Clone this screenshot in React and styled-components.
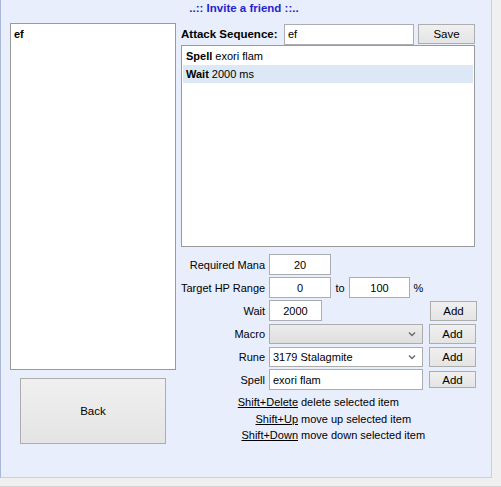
import React from 'react';
import styled, { createGlobalStyle } from 'styled-components';

const GlobalStyle = createGlobalStyle`
  html, body {
    margin: 0;
    padding: 0;
    background: #f0f0f0;
  }
  body {
    font-family: "Liberation Sans", Arial, sans-serif;
    font-size: 11px;
    color: #000;
  }
`;

const Window = styled.div`
  width: 501px;
  height: 487px;
  background: #f0f0f0;
  border-bottom: 1px solid #d4d4d4;
  box-sizing: border-box;
`;

const Panel = styled.div`
  width: 492px;
  height: 478px;
  box-sizing: border-box;
  background: #e8eefc;
  border-left: 1px solid #a9b8d6;
  border-right: 1px solid #c9cfdc;
  border-bottom: 1px solid #c9cfdc;
  display: flex;
  flex-direction: column;
`;

const Title = styled.div`
  height: 17px;
  line-height: 17px;
  text-align: center;
  font-weight: bold;
  font-size: 11.5px;
  color: #2424d0;
  padding-right: 4px;
`;

const Body = styled.div`
  display: flex;
  padding: 6px 0 0 9px;
`;

const LeftCol = styled.div`
  width: 166px;
  display: flex;
  flex-direction: column;
`;

const ListBox = styled.div`
  height: 347px;
  box-sizing: border-box;
  background: #fff;
  border: 1px solid #9a9a9a;
  padding: 3px 3px;
`;

const ListItem = styled.div`
  font-weight: bold;
  height: 15px;
  line-height: 15px;
`;

const Button = styled.button`
  box-sizing: border-box;
  width: ${p => p.w}px;
  height: ${p => p.h}px;
  padding: 0;
  border: 1px solid #adadad;
  border-radius: 0;
  background: linear-gradient(#f0f0f0, #e4e4e4);
  font-family: inherit;
  font-size: 11.5px;
  color: #000;
`;

const BackButton = styled(Button)`
  margin: 8px 0 0 10px;
`;

const RightCol = styled.div`
  width: 296px;
  margin-left: 5px;
  display: flex;
  flex-direction: column;
`;

const HeaderRow = styled.div`
  display: flex;
  align-items: center;
  height: 22px;
`;

const HeaderLabel = styled.span`
  font-weight: bold;
  width: 103px;
  font-size: 11.5px;
  white-space: nowrap;
`;

const TextInput = styled.div`
  box-sizing: border-box;
  width: ${p => p.w}px;
  height: ${p => p.h || 21}px;
  background: #fff;
  border: 1px solid #abadb3;
  display: flex;
  align-items: center;
  justify-content: ${p => (p.center ? 'center' : 'flex-start')};
  padding: 0 3px;
`;

const SaveButton = styled(Button)`
  margin-left: 4px;
`;

const SequenceList = styled.div`
  height: 202px;
  width: 294px;
  box-sizing: border-box;
  background: #fff;
  border: 1px solid #9a9a9a;
  padding: 1px 1px;
`;

const SeqRow = styled.div`
  height: 18px;
  line-height: 18px;
  padding-left: 3px;
  background: ${p => (p.selected ? '#dce8f6' : 'transparent')};

  b {
    margin-right: 3px;
  }
`;

const Form = styled.div`
  margin-top: 6px;
  display: flex;
  flex-direction: column;
`;

const FormRow = styled.div`
  display: flex;
  align-items: center;
  height: 23px;
`;

const FieldLabel = styled.span`
  width: 84px;
  text-align: right;
  margin-right: 4px;
  white-space: nowrap;
`;

const Unit = styled.span`
  width: ${p => p.w}px;
  text-align: center;
`;

const Select = styled.div`
  box-sizing: border-box;
  width: 154px;
  height: 20px;
  border: 1px solid #acacac;
  background: ${p => (p.disabled ? 'linear-gradient(#ececec, #dedede)' : '#fff')};
  display: flex;
  align-items: center;
  justify-content: space-between;
  padding: 0 6px 0 3px;
`;

const AddButton = styled(Button)`
  margin-left: ${p => p.ml || 6}px;
`;

const Spacer = styled.div`
  flex: 1;
`;

const Help = styled.div`
  margin-top: 5px;
  display: grid;
  grid-template-columns: 117px auto;
  row-gap: 3px;
  column-gap: 3px;
  line-height: 13.5px;
  white-space: nowrap;
`;

const Key = styled.span`
  text-align: right;
  text-decoration: underline;
`;

const Chevron = () => (
  <svg width="8" height="6" viewBox="0 0 8 6">
    <path d="M1 1.5 L4 4.5 L7 1.5" fill="none" stroke="#6a6a6a" strokeWidth="1.4" />
  </svg>
);

export default function App() {
  return (
    <Window>
      <GlobalStyle />
      <Panel>
        <Title>..:: Invite a friend ::..</Title>
        <Body>
          <LeftCol>
            <ListBox>
              <ListItem>ef</ListItem>
            </ListBox>
            <BackButton w={146} h={66}>Back</BackButton>
          </LeftCol>
          <RightCol>
            <HeaderRow>
              <HeaderLabel>Attack Sequence:</HeaderLabel>
              <TextInput w={130}>ef</TextInput>
              <SaveButton w={57} h={20}>Save</SaveButton>
            </HeaderRow>
            <SequenceList>
              <SeqRow><b>Spell</b>exori flam</SeqRow>
              <SeqRow selected><b>Wait</b>2000 ms</SeqRow>
            </SequenceList>
            <Form>
              <FormRow>
                <FieldLabel>Required Mana</FieldLabel>
                <TextInput w={62} center>20</TextInput>
              </FormRow>
              <FormRow>
                <FieldLabel>Target HP Range</FieldLabel>
                <TextInput w={62} center>0</TextInput>
                <Unit w={18}>to</Unit>
                <TextInput w={61} center>100</TextInput>
                <Unit w={17}>%</Unit>
              </FormRow>
              <FormRow>
                <FieldLabel>Wait</FieldLabel>
                <TextInput w={53} center>2000</TextInput>
                <Spacer />
                <AddButton w={47} h={20} ml={0}>Add</AddButton>
              </FormRow>
              <FormRow>
                <FieldLabel>Macro</FieldLabel>
                <Select disabled><span /><Chevron /></Select>
                <AddButton w={47} h={20}>Add</AddButton>
              </FormRow>
              <FormRow>
                <FieldLabel>Rune</FieldLabel>
                <Select><span>3179 Stalagmite</span><Chevron /></Select>
                <AddButton w={47} h={20}>Add</AddButton>
              </FormRow>
              <FormRow>
                <FieldLabel>Spell</FieldLabel>
                <TextInput w={154}>exori flam</TextInput>
                <AddButton w={47} h={17}>Add</AddButton>
              </FormRow>
            </Form>
            <Help>
              <Key>Shift+Delete</Key><span>delete selected item</span>
              <Key>Shift+Up</Key><span>move up selected item</span>
              <Key>Shift+Down</Key><span>move down selected item</span>
            </Help>
          </RightCol>
        </Body>
      </Panel>
    </Window>
  );
}
